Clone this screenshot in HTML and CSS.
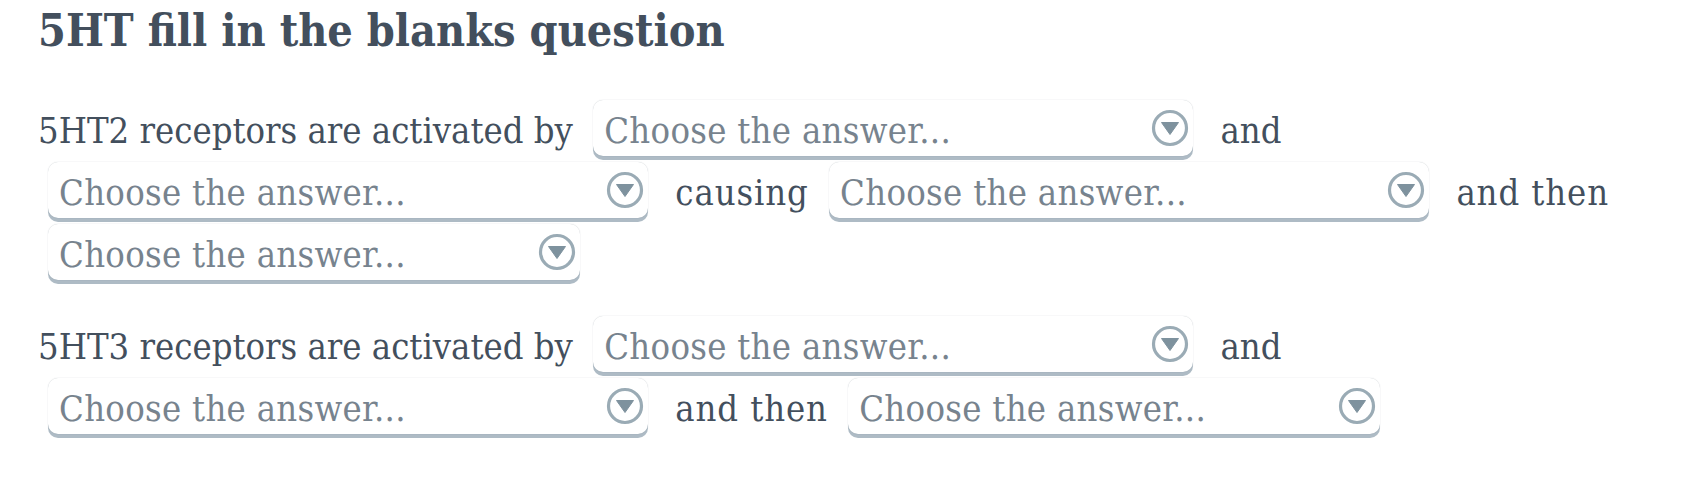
FILE: index.html
```html
<!DOCTYPE html>
<html lang="en">
<head>
<meta charset="utf-8">
<title>5HT fill in the blanks question</title>
<link rel="stylesheet" href="styles.css">
</head>
<body>
<main class="page">
  <h1 class="title">5HT fill in the blanks question</h1>
  <p class="para">5HT2 receptors are activated by <span class="select wide"><span class="ph">Choose the answer...</span><svg class="caret" viewBox="0 0 38 38" width="38" height="38"><circle cx="19" cy="19" r="16.5"/><path d="M10.5 13.5 H27.5 L19 25.5 Z"/></svg></span> and <span class="select wide"><span class="ph">Choose the answer...</span><svg class="caret" viewBox="0 0 38 38" width="38" height="38"><circle cx="19" cy="19" r="16.5"/><path d="M10.5 13.5 H27.5 L19 25.5 Z"/></svg></span> <span class="word">causing</span> <span class="select wide"><span class="ph">Choose the answer...</span><svg class="caret" viewBox="0 0 38 38" width="38" height="38"><circle cx="19" cy="19" r="16.5"/><path d="M10.5 13.5 H27.5 L19 25.5 Z"/></svg></span> <span class="word">and then</span> <span class="select narrow"><span class="ph">Choose the answer...</span><svg class="caret" viewBox="0 0 38 38" width="38" height="38"><circle cx="19" cy="19" r="16.5"/><path d="M10.5 13.5 H27.5 L19 25.5 Z"/></svg></span></p>
  <p class="para">5HT3 receptors are activated by <span class="select wide"><span class="ph">Choose the answer...</span><svg class="caret" viewBox="0 0 38 38" width="38" height="38"><circle cx="19" cy="19" r="16.5"/><path d="M10.5 13.5 H27.5 L19 25.5 Z"/></svg></span> and <span class="select wide"><span class="ph">Choose the answer...</span><svg class="caret" viewBox="0 0 38 38" width="38" height="38"><circle cx="19" cy="19" r="16.5"/><path d="M10.5 13.5 H27.5 L19 25.5 Z"/></svg></span> <span class="word">and then</span> <span class="select narrow"><span class="ph">Choose the answer...</span><svg class="caret" viewBox="0 0 38 38" width="38" height="38"><circle cx="19" cy="19" r="16.5"/><path d="M10.5 13.5 H27.5 L19 25.5 Z"/></svg></span></p>
</main>
</body>
</html>
```
FILE: styles.css
```css
html, body {
  margin: 0;
  padding: 0;
  background: #ffffff;
}

.page {
  padding: 0 20px 0 38px;
  font-family: "DejaVu Serif Condensed", "DejaVu Serif", serif;
  font-stretch: condensed;
  color: #434f5d;
}

.title {
  margin: 4px 0 0 0;
  font-size: 44.6px;
  line-height: 53px;
  font-weight: 700;
  color: #434f5d;
}

.para {
  margin: 43px 0 0 0;
  font-size: 36.1px;
  line-height: 62px;
}

.para + .para {
  margin-top: 30px;
}

.word {
  letter-spacing: 0.9px;
}

.select {
  display: inline-flex;
  align-items: center;
  justify-content: space-between;
  box-sizing: border-box;
  height: 56px;
  vertical-align: top;
  margin: 0 17px 0 10px;
  padding: 0 4px 0 11px;
  background: #ffffff;
  border-radius: 10px;
  box-shadow: 0 0 1px rgba(60, 80, 95, 0.35), 0 4px 0 #aebbc5;
}

.select.wide {
  width: 600px;
}

.select.narrow {
  width: 532px;
}

.ph {
  align-self: flex-start;
  line-height: 62px;
  color: #77838e;
  white-space: nowrap;
  letter-spacing: 0.3px;
}

.caret {
  flex: none;
}

.caret circle {
  fill: none;
  stroke: #9aabb5;
  stroke-width: 3.2;
}

.caret path {
  fill: #7e929e;
  stroke: #7e929e;
  stroke-width: 1;
  stroke-linejoin: round;
}
```
